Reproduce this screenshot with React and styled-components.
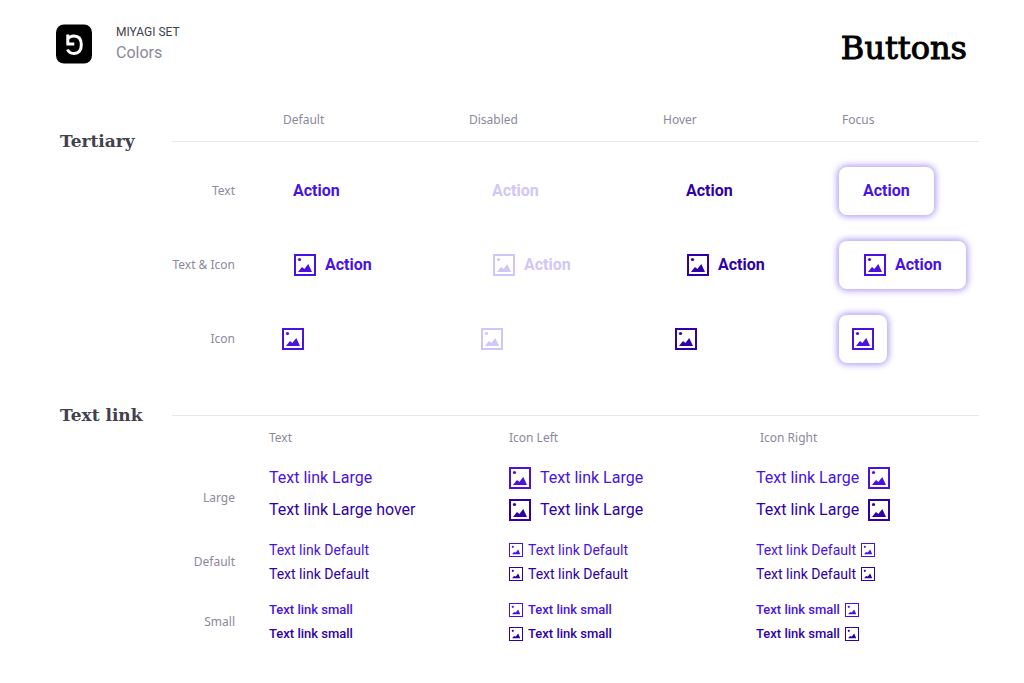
import React from "react";
import styled, { createGlobalStyle } from "styled-components";

const color = {
  ink: "#000000",
  heading: "#42414d",
  muted: "#8b899b",
  line: "#e8e8ea",
  action: "#4a12e0",
  hover: "#2f00a8",
  disabled: "#d2c6f6",
};

const GlobalStyle = createGlobalStyle`
  * { box-sizing: border-box; }
  body {
    margin: 0;
    background: #ffffff;
    color: ${color.heading};
    font-family: Roboto, "Liberation Sans", sans-serif;
  }
`;

const Page = styled.div`
  padding: 24px 45px 32px 56px;
`;

const Header = styled.header`
  display: flex;
  justify-content: space-between;
  align-items: flex-start;
  padding-right: 12px;
  height: 83px;
`;

const Brand = styled.div`
  display: flex;
  gap: 24px;
`;

const Crumb = styled.p`
  margin: 0;
  font-size: 12px;
  line-height: 16px;
`;

const PageName = styled.p`
  margin: 0;
  padding-top: 3px;
  color: ${color.muted};
  font-size: 16px;
  line-height: 20px;
`;

const Title = styled.h1`
  margin: 0;
  color: ${color.ink};
  font-family: "DejaVu Serif", serif;
  font-size: 32px;
  font-weight: 400;
  line-height: 48px;
  -webkit-text-stroke: 1px ${color.ink};
`;

const Section = styled.section`
  padding-left: 4px;
`;

const SectionHead = styled.div`
  display: flex;
  align-items: center;
  height: 20px;
`;

const SectionTitle = styled.h2`
  flex: 0 0 112px;
  margin: 0;
  font-family: "DejaVu Serif", serif;
  font-size: 17px;
  font-weight: 700;
  line-height: 20px;
  white-space: nowrap;
`;

const Rule = styled.hr`
  flex: 1;
  margin: 0;
  border: 0;
  border-top: 1px solid ${color.line};
`;

const Row = styled.div`
  display: grid;
  grid-template-columns: 175px ${(p) => p.$columns};
  align-items: center;
`;

const LabelRow = styled(Row)`
  height: 24px;
  padding-top: 2px;
`;

const Label = styled.span`
  color: ${color.muted};
  font-family: "Noto Sans", sans-serif;
  font-size: 12px;
  line-height: 16px;
  padding-left: ${(p) => p.$inset || 0}px;
  white-space: nowrap;
`;

const RowLabel = styled(Label)`
  padding-top: ${(p) => p.$drop || 0}px;
  text-align: right;
`;

const ButtonRows = styled.div`
  display: grid;
  gap: 26px;
  padding: 16px 0 42px;
`;

const Cell = styled.div`
  display: flex;
`;

const ActionButton = styled.button`
  display: inline-flex;
  align-items: center;
  gap: 8px;
  height: 48px;
  padding: 0 ${(p) => (p.$iconOnly ? 12 : 24)}px;
  border: 0;
  border-radius: 8px;
  background: #ffffff;
  color: ${(p) => color[p.$tone]};
  box-shadow: ${(p) => (p.$focus ? "0 0 6px 2px #b5a2f3" : "none")};
  font-family: inherit;
  font-size: 16px;
  font-weight: 700;
  line-height: 24px;
`;

const LinkRows = styled.div`
  display: grid;
  gap: 12px;
  padding-top: 13px;
`;

const LinkStack = styled.div`
  display: flex;
  flex-direction: column;
  align-items: flex-start;
`;

const linkSizes = {
  large: { font: 16, line: 32, gap: 8, weight: 400 },
  default: { font: 14, line: 24, gap: 4, weight: 400 },
  small: { font: 13, line: 24, gap: 4, weight: 500 },
};

const TextLink = styled.a`
  display: inline-flex;
  flex-direction: ${(p) => (p.$reverse ? "row-reverse" : "row")};
  align-items: center;
  gap: ${(p) => linkSizes[p.$size].gap}px;
  color: ${(p) => color[p.$tone]};
  font-size: ${(p) => linkSizes[p.$size].font}px;
  font-weight: ${(p) => linkSizes[p.$size].weight};
  line-height: ${(p) => linkSizes[p.$size].line}px;
  text-decoration: none;
  white-space: nowrap;
`;

const Icon = styled.svg`
  display: block;
  flex: none;
`;

function Picture({ small }) {
  if (small) {
    return (
      <Icon width="16" height="16" viewBox="0 0 16 16" aria-hidden="true">
        <rect x="1.5" y="1.5" width="13" height="13" fill="none" stroke="currentColor" />
        <circle cx="4.8" cy="4.8" r="1.1" fill="currentColor" />
        <path d="M4 12.2 6 10 7.8 10.6 10.2 7.4 12.2 12.2Z" fill="currentColor" />
      </Icon>
    );
  }
  return (
    <Icon width="24" height="24" viewBox="0 0 24 24" aria-hidden="true">
      <rect x="2" y="2" width="20" height="20" fill="none" stroke="currentColor" strokeWidth="2" />
      <circle cx="6.5" cy="6.5" r="1.6" fill="currentColor" />
      <path d="M5 19 8.7 14.2 9.8 14.6 11.3 16 15.3 11 19 19Z" fill="currentColor" />
    </Icon>
  );
}

function Logo() {
  return (
    <Icon width="36" height="40" viewBox="0 0 36 40" role="img" aria-label="Miyagi">
      <rect y="0.5" width="36" height="39" rx="8" fill="#000" />
      <path
        d="M11.8 10.5v10M10.5 20h7.8M11.8 15c1.4-2 3.6-3 6.2-3 4.8 0 7.3 3.2 7.3 8.8s-2.7 8.7-7.2 8.7c-3.2 0-5.4-1.2-6.6-4"
        fill="none"
        stroke="#fff"
        strokeWidth="3"
      />
    </Icon>
  );
}

const states = [
  { name: "Default", tone: "action", inset: 14 },
  { name: "Disabled", tone: "disabled", inset: 1 },
  { name: "Hover", tone: "hover", inset: 1 },
  { name: "Focus", tone: "action", inset: 3 },
];

const buttonKinds = [
  { name: "Text", text: true },
  { name: "Text & Icon", text: true, icon: true },
  { name: "Icon", icon: true },
];

const linkKinds = [
  { name: "Text", inset: 0 },
  { name: "Icon Left", icon: true, inset: 1 },
  { name: "Icon Right", icon: true, reverse: true, inset: 4 },
];

const linkGroups = [
  { name: "Large", size: "large", text: "Text link Large", drop: 8 },
  { name: "Default", size: "default", text: "Text link Default" },
  { name: "Small", size: "small", text: "Text link small" },
];

const buttonColumns = "34px 199fr 194fr 177fr 140fr";
const linkColumns = "34px 239fr 248fr 223fr";

export default function App() {
  return (
    <Page>
      <GlobalStyle />
      <Header>
        <Brand>
          <Logo />
          <div>
            <Crumb>MIYAGI SET</Crumb>
            <PageName>Colors</PageName>
          </div>
        </Brand>
        <Title>Buttons</Title>
      </Header>
      <main>
        <Section>
          <LabelRow $columns={buttonColumns}>
            <span />
            <span />
            {states.map((s) => (
              <Label key={s.name} $inset={s.inset}>{s.name}</Label>
            ))}
          </LabelRow>
          <SectionHead>
            <SectionTitle>Tertiary</SectionTitle>
            <Rule />
          </SectionHead>
          <ButtonRows>
            {buttonKinds.map((kind) => (
              <Row key={kind.name} $columns={buttonColumns}>
                <RowLabel>{kind.name}</RowLabel>
                <span />
                {states.map((s) => (
                  <Cell key={s.name}>
                    <ActionButton
                      type="button"
                      $tone={s.tone}
                      $focus={s.name === "Focus"}
                      $iconOnly={!kind.text}
                      disabled={s.name === "Disabled"}
                      aria-label={kind.text ? undefined : "Action"}
                    >
                      {kind.icon && <Picture />}
                      {kind.text && "Action"}
                    </ActionButton>
                  </Cell>
                ))}
              </Row>
            ))}
          </ButtonRows>
        </Section>
        <Section>
          <SectionHead>
            <SectionTitle>Text link</SectionTitle>
            <Rule />
          </SectionHead>
          <LabelRow $columns={linkColumns}>
            <span />
            <span />
            {linkKinds.map((k) => (
              <Label key={k.name} $inset={k.inset}>{k.name}</Label>
            ))}
          </LabelRow>
          <LinkRows>
            {linkGroups.map((group) => (
              <Row key={group.name} $columns={linkColumns}>
                <RowLabel $drop={group.drop}>{group.name}</RowLabel>
                <span />
                {linkKinds.map((kind) => (
                  <LinkStack key={kind.name}>
                    {["action", "hover"].map((tone) => (
                      <TextLink
                        key={tone}
                        href="#"
                        $size={group.size}
                        $tone={tone}
                        $reverse={kind.reverse}
                      >
                        {kind.icon && <Picture small={group.size !== "large"} />}
                        {group.text}
                        {tone === "hover" && group.size === "large" && !kind.icon && " hover"}
                      </TextLink>
                    ))}
                  </LinkStack>
                ))}
              </Row>
            ))}
          </LinkRows>
        </Section>
      </main>
    </Page>
  );
}
